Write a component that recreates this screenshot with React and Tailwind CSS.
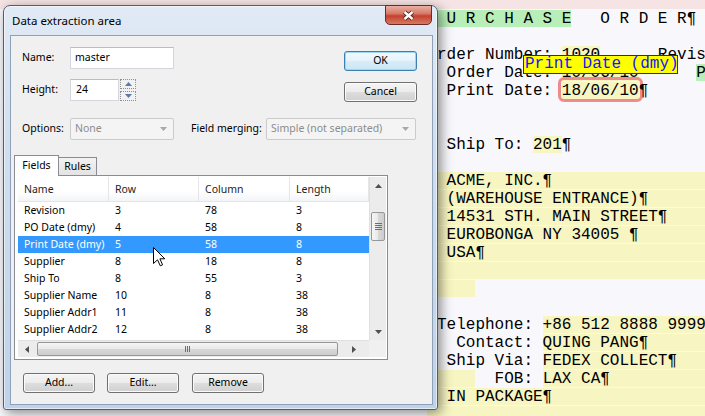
import React from "react";

const Y = "bg-[#f7f5c1]";
const G = "bg-[#b8efb8]";

// document lines behind the dialog, col 0 sits at x 427.4
const docLines = [
  [{ t: "P U R C H A S E", bg: G }, { t: "   O R D E R¶" }],
  [],
  [{ t: "Order Number: " }, { t: "1020", bg: Y }, { t: "      Revision: 3¶" }],
  [{ t: "  Order Date: " }, { t: "10/06/10", bg: Y }, { t: "      " }, { t: "Page 1", bg: G }],
  [{ t: "  Print Date: " }, { t: "18/06/10", bg: Y, sel: true }, { t: "¶" }],
  [],
  [],
  [{ t: "  Ship To: " }, { t: "201", bg: Y }, { t: "¶" }],
  [],
  [{ t: "  ACME, INC.¶", bg: Y, fill: true }],
  [{ t: "  (WAREHOUSE ENTRANCE)¶", bg: Y, fill: true }],
  [{ t: "  14531 STH. MAIN STREET¶", bg: Y, fill: true }],
  [{ t: "  EUROBONGA NY 34005 ¶", bg: Y, fill: true }],
  [{ t: "  USA¶", bg: Y, fill: true }],
  [{ t: "", bg: Y, fill: true }],
  [{ t: "     ", bg: Y }],
  [],
  [{ t: " Telephone: " }, { t: "+86 512 8888 9999¶", bg: Y, fill: true }],
  [{ t: "   Contact: " }, { t: "QUING PANG¶", bg: Y, fill: true }],
  [{ t: "  Ship Via: " }, { t: "FEDEX COLLECT¶", bg: Y, fill: true }],
  [{ t: "     ", bg: Y }, { t: "  FOB: " }, { t: "LAX CA¶", bg: Y, fill: true }],
  [{ t: "  IN PACKAGE¶", bg: Y, fill: true }],
  [{ t: "", bg: Y, fill: true }],
];

const fields = [
  ["Revision", "3", "78", "3"],
  ["PO Date (dmy)", "4", "58", "8"],
  ["Print Date (dmy)", "5", "58", "8"],
  ["Supplier", "8", "18", "8"],
  ["Ship To", "8", "55", "3"],
  ["Supplier Name", "10", "8", "38"],
  ["Supplier Addr1", "11", "8", "38"],
  ["Supplier Addr2", "12", "8", "38"],
];
const colW = ["w-[91px]", "w-[90px]", "w-[91px]", "w-[79px]"];
const heads = ["Name", "Row", "Column", "Length"];

const btn =
  "flex items-center justify-center h-[20px] rounded-[3px] border border-[#707070] bg-[linear-gradient(to_bottom,#f4f4f4,#ececec_48%,#dddddd_52%,#d0d0d0)] shadow-[inset_0_0_0_1px_#fbfbfb]";

function DocLine({ segs }) {
  return (
    <div className="flex h-[18px] leading-[18px] whitespace-pre">
      {segs.map((s, i) => (
        <span
          key={i}
          className={`relative h-[17px] ${s.bg || ""} ${s.fill ? "flex-1" : ""}`}
        >
          {s.t}
          {s.sel && (
            <span className="absolute -left-[4px] -right-[4px] -top-[5px] -bottom-[3px] rounded-[6px] border-[3px] border-[#ee8c8c]" />
          )}
        </span>
      ))}
    </div>
  );
}

function Arrow({ dir, color = "#505050" }) {
  const pts = {
    up: "0,4 3.5,0 7,4",
    down: "0,0 7,0 3.5,4",
    left: "4,0 4,7 0,3.5",
    right: "0,0 0,7 4,3.5",
  }[dir];
  const vert = dir === "up" || dir === "down";
  return (
    <svg width={vert ? 7 : 4} height={vert ? 4 : 7}>
      <polygon points={pts} fill={color} />
    </svg>
  );
}

function Select({ w, text }) {
  return (
    <div
      className={`${w} flex items-center h-[22px] rounded-[2px] border border-[#cbcbcb] bg-[#f4f4f4] pl-[4px] pr-[6px] text-[#8c8c8c]`}
    >
      <span className="flex-1">{text}</span>
      <Arrow dir="down" color="#a8a8a8" />
    </div>
  );
}

function VScroll() {
  return (
    <div className="w-[17px] h-[163px] flex flex-col bg-[#ececec] border-l border-[#e0e0e0]">
      <div className="h-[17px] flex items-center justify-center">
        <Arrow dir="up" />
      </div>
      <div className="mt-[18px] mx-[1px] h-[29px] rounded-[2px] border border-[#979797] bg-[linear-gradient(to_right,#f5f5f5,#e9e9e9_50%,#d8d8d8_51%,#cdcdcd)] flex flex-col items-center justify-center gap-[1px]">
        {[0, 1, 2, 3].map((i) => (
          <div key={i} className="w-[7px] h-[1px] bg-[#6e6e6e]" />
        ))}
      </div>
      <div className="flex-1" />
      <div className="h-[17px] flex items-center justify-center">
        <Arrow dir="down" />
      </div>
    </div>
  );
}

function HScroll() {
  return (
    <div className="flex h-[17px]">
      <div className="w-[351px] flex items-center bg-[#ececec] border-t border-[#e0e0e0]">
        <div className="w-[17px] flex justify-center">
          <Arrow dir="left" />
        </div>
        <div className="ml-[2px] w-[301px] h-[14px] rounded-[2px] border border-[#979797] bg-[linear-gradient(to_bottom,#f5f5f5,#e9e9e9_50%,#d8d8d8_51%,#cdcdcd)] flex items-center justify-center gap-[1px]">
          {[0, 1, 2].map((i) => (
            <div key={i} className="w-[1px] h-[6px] bg-[#6e6e6e]" />
          ))}
        </div>
        <div className="flex-1 flex justify-center">
          <Arrow dir="right" />
        </div>
      </div>
      <div className="w-[17px] bg-[#f0f0f0]" />
    </div>
  );
}

function FieldList() {
  return (
    <div className="flex flex-col w-[368px] h-[180px]">
      <div className="flex h-[163px]">
        <div className="w-[351px] flex flex-col overflow-hidden">
          <div className="flex h-[25px] bg-[linear-gradient(to_bottom,#ffffff,#ffffff_60%,#f3f4f6)] border-b border-[#e5e5e5] text-[#1e1e1e]">
            {heads.map((h, i) => (
              <div
                key={h}
                className={`${colW[i]} flex items-center pl-[6px] pt-[2px] border-r border-[#e4e6ea]`}
              >
                {h}
              </div>
            ))}
          </div>
          {fields.map((r, ri) => (
            <div
              key={r[0]}
              className={`flex h-[17px] items-center ${ri === 2 ? "bg-[#3399ff] text-white" : ""}`}
            >
              {r.map((c, i) => (
                <div key={i} className={`${colW[i]} pl-[6px]`}>
                  {c}
                </div>
              ))}
            </div>
          ))}
        </div>
        <VScroll />
      </div>
      <HScroll />
    </div>
  );
}

function Dialog() {
  return (
    <div className="absolute left-[3px] top-[5px] z-20 w-[435px] h-[405px] flex flex-col rounded-t-[7px] rounded-b-[3px] border border-[#4f5e73] bg-[linear-gradient(to_bottom,#e1eaf5,#d0def0_35%,#bfd2e9)] shadow-[3px_3px_12px_rgba(0,0,0,0.45),inset_0_0_0_1px_rgba(255,255,255,0.55)] font-['Noto_Sans',sans-serif] text-[10.5px] text-black">
      <div className="h-[29px] flex items-center pl-[8px] text-[11.5px]">
        Data extraction area
      </div>
      <div className="absolute left-[381px] top-[-1px] w-[47px] h-[20px] rounded-b-[5px] border border-[#6b2a23] bg-[linear-gradient(to_bottom,#eab0a4,#d77a68_42%,#c4412f_55%,#d47a62)] flex items-center justify-center">
        <svg width="13" height="11" viewBox="0 0 13 11">
          <path d="M2.5 2 L10.5 9 M10.5 2 L2.5 9" stroke="#4a1812" strokeWidth="4.2" />
          <path d="M2.5 2 L10.5 9 M10.5 2 L2.5 9" stroke="#ffffff" strokeWidth="2.4" />
        </svg>
      </div>

      <div className="flex-1 ml-[6px] mr-[4px] mb-[4px] border border-[#8ea1b9] bg-[#f0f0f0] flex flex-col">
        <div className="flex pl-[11px] pr-[15px] pt-[11px]">
          <div className="flex flex-col gap-[10px]">
            <div className="flex items-center h-[22px]">
              <span className="w-[48px]">Name:</span>
              <div className="w-[104px] h-[22px] flex items-center pl-[4px] bg-white border border-[#d3d6dc] border-t-[#b9bcc3]">
                master
              </div>
            </div>
            <div className="flex items-center h-[22px]">
              <span className="w-[48px]">Height:</span>
              <div className="w-[49px] h-[22px] flex items-center pl-[5px] bg-white border border-[#d3d6dc] border-t-[#b9bcc3]">
                24
              </div>
              <div className="ml-[1px] flex flex-col gap-[2px]">
                <div className="w-[16px] h-[10px] flex items-center justify-center border border-dotted border-[#8f8f8f] bg-[#f2f2f2]">
                  <Arrow dir="up" color="#5d79a8" />
                </div>
                <div className="w-[16px] h-[10px] flex items-center justify-center border border-dotted border-[#8f8f8f] bg-[#f2f2f2]">
                  <Arrow dir="down" color="#5d79a8" />
                </div>
              </div>
            </div>
          </div>
          <div className="ml-auto flex flex-col gap-[11px] pt-[4px]">
            <div className="w-[73px] flex items-center justify-center h-[20px] rounded-[3px] border border-[#3c7fb1] bg-[linear-gradient(to_bottom,#f2f9fd,#e6f3fb_48%,#d6ecf9_52%,#cbe6f6)] shadow-[inset_0_0_0_1px_#9fd6f3]">
              OK
            </div>
            <div className={`${btn} w-[73px]`}>Cancel</div>
          </div>
        </div>

        <div className="flex items-center h-[22px] mt-[16px] pl-[11px]">
          <span className="w-[48px]">Options:</span>
          <Select w="w-[104px]" text="None" />
          <span className="ml-[17px] w-[75px]">Field merging:</span>
          <Select w="w-[150px]" text="Simple (not separated)" />
        </div>

        <div className="flex items-end h-[21px] mt-[15px] pl-[3px]">
          <div className="relative z-10 w-[45px] h-[21px] flex items-center justify-center bg-white border border-b-0 border-[#898c95]">
            Fields
          </div>
          <div className="w-[38px] h-[18px] mb-[1px] flex items-center justify-center border border-l-0 border-b-0 border-[#898c95] bg-[linear-gradient(to_bottom,#f2f2f2,#e3e3e3)]">
            Rules
          </div>
        </div>
        <div className="ml-[3px] -mt-[1px] w-[374px] h-[185px] border border-[#898c95] bg-white pl-[3px] pt-[1px]">
          <FieldList />
        </div>

        <div className="flex mt-[13px] pl-[12px]">
          <div className={`${btn} w-[72px]`}>Add...</div>
          <div className={`${btn} w-[72px] ml-[12px]`}>Edit...</div>
          <div className={`${btn} w-[72px] ml-[13px]`}>Remove</div>
        </div>
      </div>
    </div>
  );
}

export default function App() {
  return (
    <div className="relative w-[705px] h-[416px] overflow-hidden bg-[#f8f8fc] text-black font-['Liberation_Mono',monospace] text-[16px]">
      <div className="h-[9px] bg-[#f6e4e4]" />
      <div className="pt-[1px] pl-[427.4px]">
        {docLines.map((segs, i) => (
          <DocLine key={i} segs={segs} />
        ))}
      </div>

      <div className="absolute left-[523px] top-[55px] z-10 w-[155px] h-[19px] border border-[#1f2aa0] bg-[#ffff00] pl-[1px] leading-[17px] text-[#1414ff] whitespace-pre">
        Print Date (dmy)
      </div>

      <Dialog />

      <svg
        className="absolute left-[153px] top-[247px] z-30"
        width="13"
        height="20"
        viewBox="0 0 13 20"
      >
        <path
          d="M0.5 0.5 L0.5 16.5 L4.5 12.8 L7.3 18.8 L9.6 17.8 L6.9 11.8 L11.8 11.8 Z"
          fill="#ffffff"
          stroke="#000000"
          strokeWidth="1"
        />
      </svg>
    </div>
  );
}
